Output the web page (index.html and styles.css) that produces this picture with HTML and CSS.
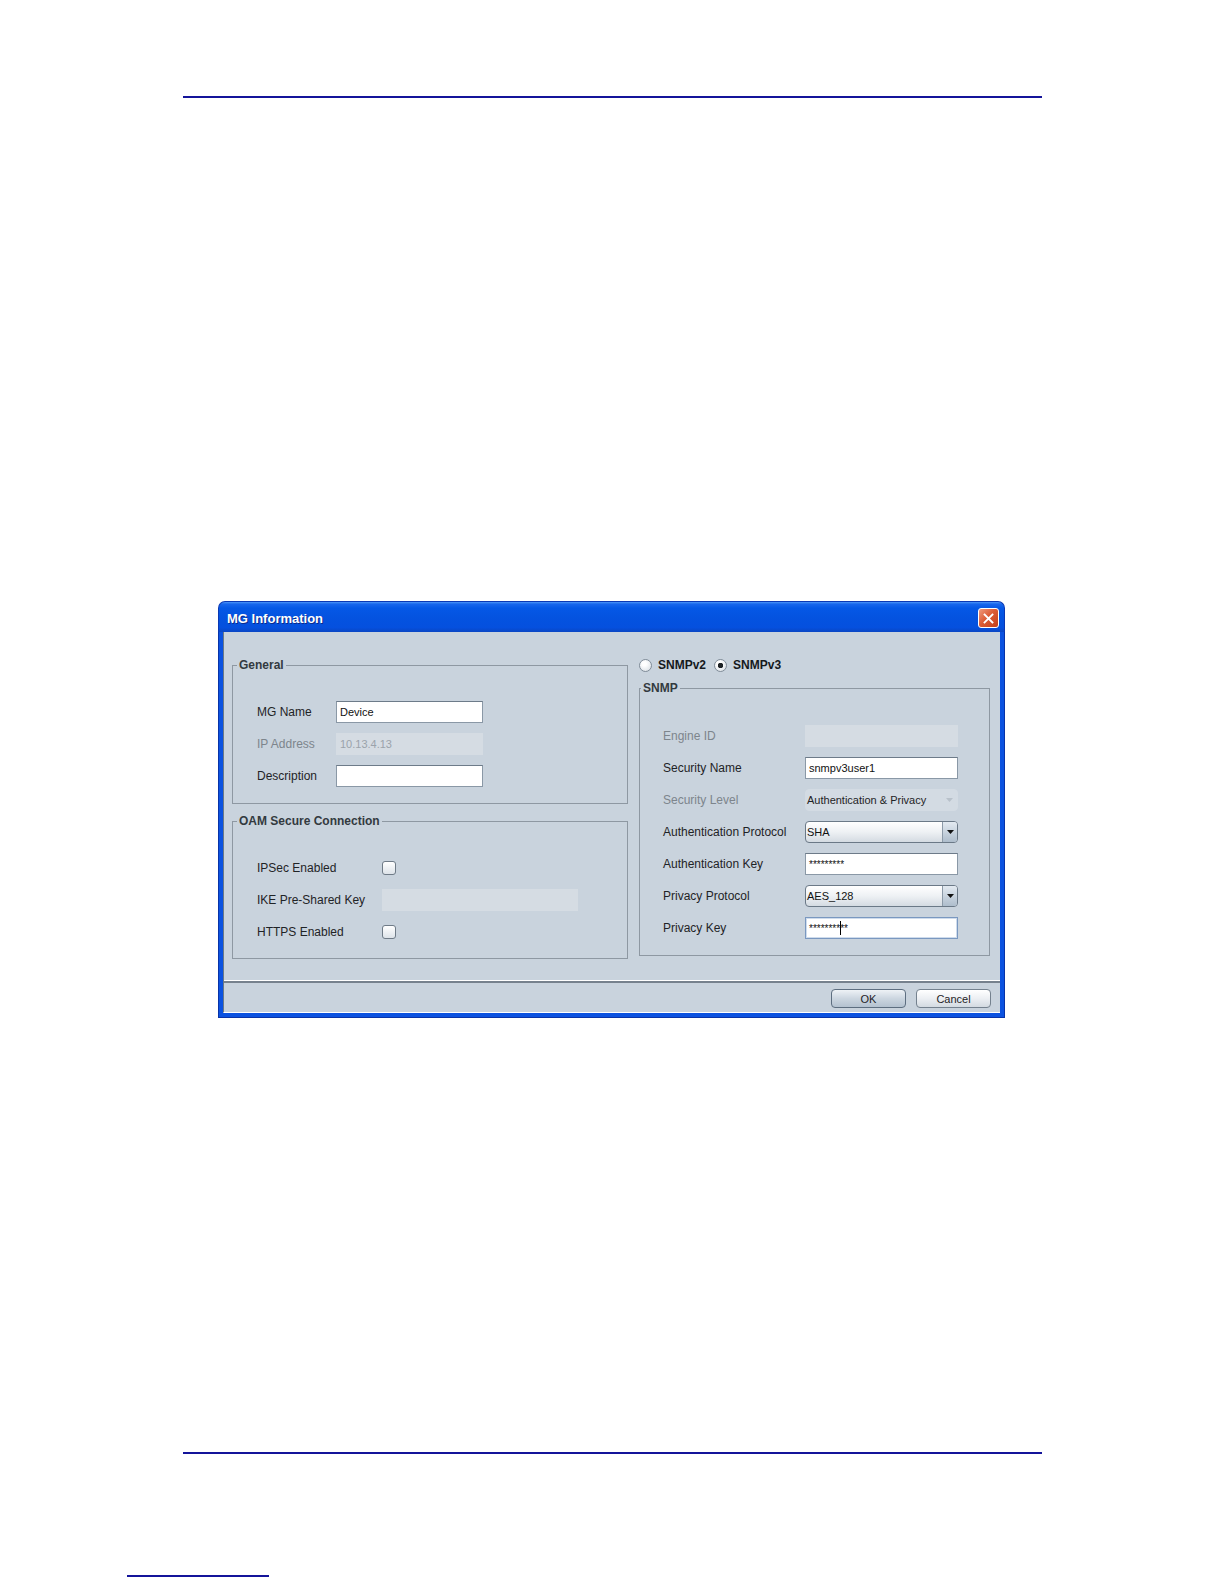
FILE: index.html
```html
<!DOCTYPE html>
<html lang="en">
<head>
<meta charset="utf-8">
<title>MG Information</title>
<link rel="stylesheet" href="styles.css">
</head>
<body>
<div class="page">
  <div class="rule rule-top"></div>

  <div class="dialog">
    <div class="titlebar">
      <span class="title">MG Information</span>
      <span class="close">
        <svg width="13" height="13" viewBox="0 0 13 13"><path d="M2.5 2.5L10.5 10.5M10.5 2.5L2.5 10.5" stroke="#fff" stroke-width="1.8" stroke-linecap="square"/></svg>
      </span>
    </div>
    <div class="frame">
      <div class="client">
        <div class="main">
          <div class="col-left">
            <fieldset class="group general">
              <legend>General</legend>
              <div class="form form-general">
                <span class="lbl">MG Name</span>
                <div class="field">Device</div>
                <span class="lbl dis">IP Address</span>
                <div class="field disabled">10.13.4.13</div>
                <span class="lbl">Description</span>
                <div class="field"></div>
              </div>
            </fieldset>
            <fieldset class="group oam">
              <legend>OAM Secure Connection</legend>
              <div class="form form-oam">
                <span class="lbl">IPSec Enabled</span>
                <div class="cell"><span class="check"></span></div>
                <span class="lbl">IKE Pre-Shared Key</span>
                <div class="field disabled"></div>
                <span class="lbl">HTTPS Enabled</span>
                <div class="cell"><span class="check"></span></div>
              </div>
            </fieldset>
          </div>

          <div class="col-right">
            <div class="radios">
              <span class="radio"></span><span class="rlabel">SNMPv2</span>
              <span class="radio on"></span><span class="rlabel">SNMPv3</span>
            </div>
            <fieldset class="group snmp">
              <legend>SNMP</legend>
              <div class="form form-snmp">
                <span class="lbl dis">Engine ID</span>
                <div class="field disabled"></div>
                <span class="lbl">Security Name</span>
                <div class="field">snmpv3user1</div>
                <span class="lbl dis">Security Level</span>
                <div class="combo disabled">
                  <span class="val">Authentication &amp; Privacy</span>
                  <span class="arrow"><svg width="7" height="4" viewBox="0 0 7 4"><path d="M0 0H7L3.5 4Z" fill="#b8c1ca"/></svg></span>
                </div>
                <span class="lbl">Authentication Protocol</span>
                <div class="combo">
                  <span class="val">SHA</span>
                  <span class="arrow"><svg width="7" height="4" viewBox="0 0 7 4"><path d="M0 0H7L3.5 4Z" fill="#111"/></svg></span>
                </div>
                <span class="lbl">Authentication Key</span>
                <div class="field stars">*********</div>
                <span class="lbl">Privacy Protocol</span>
                <div class="combo">
                  <span class="val">AES_128</span>
                  <span class="arrow"><svg width="7" height="4" viewBox="0 0 7 4"><path d="M0 0H7L3.5 4Z" fill="#111"/></svg></span>
                </div>
                <span class="lbl">Privacy Key</span>
                <div class="field stars focus">********<span class="caret"></span>**</div>
              </div>
            </fieldset>
          </div>
        </div>
        <div class="sep"></div>
        <div class="buttons">
          <button class="btn ok" type="button">OK</button>
          <button class="btn" type="button">Cancel</button>
        </div>
      </div>
    </div>
  </div>

  <div class="rule rule-bottom"></div>
  <div class="rule footlink"></div>
</div>
</body>
</html>
```

FILE: styles.css
```css
* { box-sizing: border-box; }

body {
  margin: 0;
  background: #ffffff;
  font-family: "Liberation Sans", Arial, sans-serif;
}

.page {
  width: 1224px;
  height: 1584px;
  display: flex;
  flex-direction: column;
  align-items: flex-start;
}

.rule {
  height: 2px;
  background: #14149a;
}
.rule-top { margin: 96px 0 0 183px; width: 859px; }
.rule-bottom { margin: 434px 0 0 183px; width: 859px; }
.footlink { margin: 121px 0 0 127px; width: 142px; }

/* dialog */
.dialog {
  margin: 503px 0 0 218px;
  width: 787px;
  height: 417px;
  display: flex;
  flex-direction: column;
}

.titlebar {
  height: 31px;
  flex: none;
  border-radius: 7px 7px 0 0;
  background: linear-gradient(#4a96fa 0, #1866ec 2px, #0558e6 6px, #0453e0 50%, #0550de 85%, #0a46c4 100%);
  border: 1px solid #0a38b4;
  border-bottom: none;
  display: flex;
  align-items: center;
  justify-content: space-between;
  padding: 2px 5px 0 8px;
}

.title {
  color: #ffffff;
  font-weight: bold;
  font-size: 13px;
  text-shadow: 1px 1px 0 #0b2a8c;
}

.close {
  width: 21px;
  height: 20px;
  border: 1px solid #ffffff;
  border-radius: 3px;
  background: linear-gradient(135deg, #ef9a7c 0%, #dc5c36 45%, #c23f1a 100%);
  display: flex;
  align-items: center;
  justify-content: center;
}

.frame {
  flex: 1;
  background: #0b52e0;
  box-shadow: inset 1px 0 0 #0833a8, inset -1px 0 0 #0833a8, inset 0 -1px 0 #0833a8;
  padding: 0 5px 5px 5px;
  display: flex;
}

.client {
  flex: 1;
  background: #c9d3dd;
  border-left: 1px solid #6a7886;
  border-bottom: 1px solid #ffffff;
  display: flex;
  flex-direction: column;
}

.main {
  height: 348px;
  flex: none;
  display: flex;
  gap: 11px;
  padding: 26px 10px 0 8px;
}

.col-left {
  width: 396px;
  display: flex;
  flex-direction: column;
  gap: 10px;
}

.col-right {
  width: 351px;
  display: flex;
  flex-direction: column;
  gap: 9px;
}

/* group boxes */
.group {
  margin: 0;
  padding: 0;
  min-width: 0;
  border: 1px solid #8e98a2;
}

.group legend {
  margin-left: 4px;
  padding: 0 2px;
  font-weight: bold;
  font-size: 12px;
  line-height: 14px;
  color: #333a40;
}
.snmp legend { margin-left: 1px; }

.form {
  display: grid;
  grid-auto-rows: 22px;
  row-gap: 10px;
  align-items: center;
}

.form-general {
  grid-template-columns: 79px 147px;
  padding: 29px 0 16px 24px;
}

.form-oam {
  grid-template-columns: 125px 196px;
  padding: 29px 0 15px 24px;
}

.form-snmp {
  grid-template-columns: 142px 153px;
  padding: 30px 0 16px 23px;
}

.lbl {
  font-size: 12px;
  color: #1f2326;
  white-space: nowrap;
}
.lbl.dis { color: #7d858c; }

.field {
  height: 22px;
  background: #ffffff;
  border: 1px solid #8a98a6;
  border-top-color: #6d7b89;
  font-size: 11px;
  color: #111;
  padding: 0 3px;
  display: flex;
  align-items: center;
  white-space: nowrap;
}
.field.disabled {
  background: #d5dce3;
  border-color: #d5dce3;
  color: #9ba3ab;
}
.field.focus {
  border-color: #7a98c0;
  box-shadow: inset 0 0 0 1px #cfdcec;
}
.field.stars { font-size: 10px; letter-spacing: 0; }

.caret {
  display: inline-block;
  width: 1px;
  height: 14px;
  background: #000;
  margin: 0 -1px 0 0;
}

.cell {
  display: flex;
  align-items: center;
}

.check {
  width: 14px;
  height: 14px;
  border: 1px solid #6f7b87;
  border-radius: 3px;
  background: linear-gradient(#ffffff, #dde3e9);
}

.combo {
  height: 22px;
  border: 1px solid #6b7987;
  border-radius: 4px;
  background: linear-gradient(#ffffff, #eef1f4 50%, #d4dbe2);
  display: flex;
  align-items: stretch;
  font-size: 11px;
  color: #111;
}
.combo .val {
  flex: 1;
  padding-left: 1px;
  display: flex;
  align-items: center;
  white-space: nowrap;
}
.combo .arrow {
  width: 15px;
  border-left: 1px solid #8c9aa8;
  border-radius: 0 3px 3px 0;
  background: linear-gradient(#e3eaf1, #aebdcc);
  display: flex;
  align-items: center;
  justify-content: center;
}
.combo.disabled {
  border-color: #d3dbe3;
  background: #d3dbe3;
  color: #1f2326;
}
.combo.disabled .arrow {
  border-left: none;
  background: transparent;
}

/* radios */
.radios {
  height: 14px;
  display: flex;
  align-items: center;
}
.radio {
  width: 13px;
  height: 13px;
  border-radius: 50%;
  border: 1px solid #808c98;
  background: radial-gradient(circle at 40% 35%, #ffffff 20%, #d3dae1 100%);
  margin-right: 6px;
}
.radio.on {
  background: radial-gradient(circle, #1d2226 0 2.5px, transparent 3px), radial-gradient(circle at 40% 35%, #ffffff 20%, #d3dae1 100%);
  margin-left: 8px;
}
.rlabel {
  font-weight: bold;
  font-size: 12px;
  color: #15191c;
}

/* bottom */
.sep {
  height: 3px;
  flex: none;
  background: linear-gradient(#ffffff 0 1px, #76818d 1px 100%);
}

.buttons {
  flex: 1;
  display: flex;
  justify-content: flex-end;
  align-items: flex-start;
  gap: 10px;
  padding: 6px 9px 0 0;
}

.btn {
  width: 75px;
  height: 19px;
  padding: 0;
  font-family: "Liberation Sans", Arial, sans-serif;
  font-size: 11px;
  color: #1f2326;
  border: 1px solid #74818e;
  border-radius: 4px;
  background: linear-gradient(#ffffff, #eceff3 50%, #d3dae1);
}
.btn.ok {
  border-color: #5d6e80;
  background: linear-gradient(#eef2f6, #ccd6e0 50%, #b4c2d0);
}
```
